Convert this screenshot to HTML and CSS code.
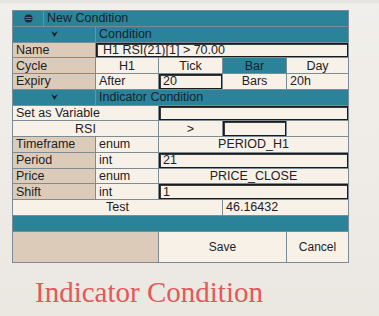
FILE: index.html
```html
<!DOCTYPE html>
<html>
<head>
<meta charset="utf-8">
<link rel="stylesheet" href="styles.css">
</head>
<body>
<div class="page">
  <div class="topstrip"></div>
  <div class="panel">
    <div class="cell teal c1 icon">
      <svg width="9" height="9" viewBox="0 0 9 9"><circle cx="4.5" cy="4.5" r="4" fill="#1c2b33"/><rect x="1.5" y="3" width="6" height="1" fill="#2b8399"/><rect x="1.5" y="5" width="6" height="1" fill="#2b8399"/></svg>
    </div>
    <div class="cell teal s5 left">New Condition</div>

    <div class="cell teal s2 center"><svg class="chev" width="7" height="6" viewBox="0 0 7 6"><path d="M0 0 L3.5 2.2 L7 0 L3.5 6 Z" fill="#14232b"/></svg></div>
    <div class="cell teal s4 left">Condition</div>

    <div class="cell tan s2 left">Name</div>
    <div class="cell input s4 left pad">H1 RSI(21)[1] &gt; 70.00</div>

    <div class="cell tan s2 left">Cycle</div>
    <div class="cell cream center">H1</div>
    <div class="cell cream center">Tick</div>
    <div class="cell teal sel center">Bar</div>
    <div class="cell cream center">Day</div>

    <div class="cell tan s2 left">Expiry</div>
    <div class="cell cream left">After</div>
    <div class="cell input left">20</div>
    <div class="cell cream center">Bars</div>
    <div class="cell cream left">20h</div>

    <div class="cell teal s2 center"><svg class="chev" width="7" height="6" viewBox="0 0 7 6"><path d="M0 0 L3.5 2.2 L7 0 L3.5 6 Z" fill="#14232b"/></svg></div>
    <div class="cell teal s4 left">Indicator Condition</div>

    <div class="cell cream s3 left">Set as Variable</div>
    <div class="cell input s3"></div>

    <div class="cell cream s3 center">RSI</div>
    <div class="cell cream center">&gt;</div>
    <div class="cell input"></div>
    <div class="cell cream"></div>

    <div class="cell tan s2 left">Timeframe</div>
    <div class="cell cream left">enum</div>
    <div class="cell cream s3 center">PERIOD_H1</div>

    <div class="cell tan s2 left">Period</div>
    <div class="cell cream left">int</div>
    <div class="cell input s3 left">21</div>

    <div class="cell tan s2 left">Price</div>
    <div class="cell cream left">enum</div>
    <div class="cell cream s3 center">PRICE_CLOSE</div>

    <div class="cell tan s2 left">Shift</div>
    <div class="cell cream left">int</div>
    <div class="cell input s3 left">1</div>

    <div class="cell cream s4 center">Test</div>
    <div class="cell cream s2 left">46.16432</div>

    <div class="cell teal s6"></div>

    <div class="cell tan s3"></div>
    <div class="cell cream s2 center btn">Save</div>
    <div class="cell cream center btn">Cancel</div>
  </div>
  <div class="caption">Indicator Condition</div>
</div>
</body>
</html>
```

FILE: styles.css
```css
html, body {
  margin: 0;
  padding: 0;
}
body {
  width: 379px;
  height: 316px;
  overflow: hidden;
  background: linear-gradient(180deg, #f1efeb 0%, #eeebe6 60%, #ebe8e2 100%);
  font-family: "Liberation Sans", Arial, sans-serif;
}
.page {
  padding-left: 12px;
}
.topstrip {
  height: 3px;
  margin-left: -12px;
  width: 379px;
  background: #e6e4e0;
  margin-bottom: 7px;
}
.panel {
  width: 337px;
  box-sizing: border-box;
  display: grid;
  grid-template-columns: 30px 51px 62px 63px 63px 61px;
  grid-template-rows: repeat(14, 14.75px) 30px;
  gap: 1px;
  padding: 1px;
  background: #7c8c96;
  font-size: 12.5px;
  color: #1e2226;
}
.cell {
  display: flex;
  align-items: center;
  box-sizing: border-box;
  line-height: 14px;
  white-space: nowrap;
  overflow: hidden;
}
.c1 { grid-column: span 1; }
.s2 { grid-column: span 2; }
.s3 { grid-column: span 3; }
.s4 { grid-column: span 4; }
.s5 { grid-column: span 5; }
.s6 { grid-column: span 6; }
.teal {
  background: #2b8399;
  color: #13232c;
}
.tan {
  background: #dccbb8;
}
.cream {
  background: #f8f1e7;
}
.input {
  background: #f8f1e7;
  border: 1px solid #1b1b1b;
  box-shadow: inset 1px 1px 0 #3a3a3a;
}
.left {
  justify-content: flex-start;
  padding-left: 3px;
}
.pad {
  padding-left: 6px;
}
.center {
  justify-content: center;
}
.icon {
  justify-content: center;
}
.sel {
  color: #13232c;
}
.btn {
  font-size: 12px;
}
.caption {
  margin-top: 15px;
  margin-left: 23px;
  font-family: "Liberation Serif", "Times New Roman", serif;
  font-size: 29px;
  line-height: 29px;
  color: #e3585a;
}
```
